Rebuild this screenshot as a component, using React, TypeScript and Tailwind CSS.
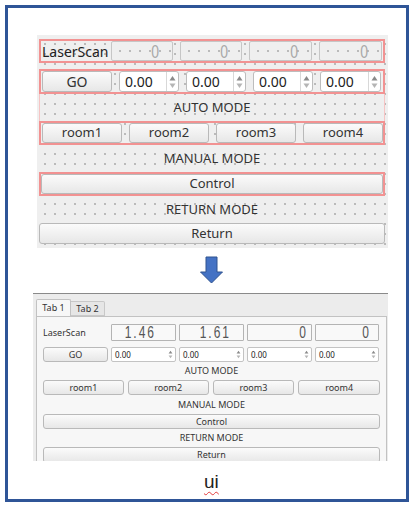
import React from "react";

const font = { fontFamily: '"Noto Sans", "Open Sans", sans-serif' };

const dots =
  "bg-[#efefef] bg-[radial-gradient(circle,#b9b9b9_0.7px,transparent_1px)] bg-size-[10px_10px] bg-position-[3px_4px]";

const Btn = ({ label, w, h, size }: { label: string; w: string; h: string; size: string }) => (
  <div
    className={`${w} ${h} ${size} flex items-center justify-center rounded-[3px] border border-[#b9b9b9] bg-linear-to-b from-[#fbfbfb] to-[#e7e7e7] text-[#333]`}
  >
    {label}
  </div>
);

const SpinArrows = ({ big }: { big?: boolean }) => (
  <svg width={big ? 7 : 5} height={big ? 14 : 9} viewBox="0 0 7 14" className="shrink-0">
    <polygon points="3.5,1 6.5,5.5 0.5,5.5" fill="#8a8a8a" />
    <polygon points="3.5,13 6.5,8.5 0.5,8.5" fill="#b5b5b5" />
  </svg>
);

const TopSpin = ({ w }: { w: string }) => (
  <div className={`${w} h-[21px] flex items-center rounded-[3px] border border-[#bdbdbd] bg-white pl-[5px] pr-[2px] text-[14px] text-[#222]`}>
    <span className="flex-1">0.00</span>
    <div className="h-full w-px bg-[#d8d8d8] mr-[2px]" />
    <SpinArrows big />
  </div>
);

const lcdFont = { fontFamily: '"Liberation Sans", sans-serif' };

const TopLcd = ({ w }: { w: string }) => (
  <div className={`${w} h-[20px] flex items-center justify-end pr-[13px] rounded-[2px] border border-[#c6c6c6] ${dots}`}>
    <span className="text-[14px] leading-none text-[#a8a8a8] scale-y-[1.3]" style={lcdFont}>
      0
    </span>
  </div>
);

const SmallSpin = ({ w }: { w: string }) => (
  <div className={`${w} h-[15px] flex items-center rounded-[2px] border border-[#c3c3c3] bg-white pl-[3px] pr-[2px] text-[8px] text-[#222]`}>
    <span className="flex-1">0.00</span>
    <SpinArrows />
  </div>
);

const Lcd = ({ value, w, pr }: { value: string; w: string; pr: string }) => (
  <div className={`${w} h-[17px] flex items-center justify-end ${pr} rounded-[1px] border border-[#b4b4b4] bg-[#f9f9f9]`}>
    <span className="text-[12px] leading-none tracking-[2px] text-[#555] scale-y-[1.3]" style={lcdFont}>
      {value}
    </span>
  </div>
);

export default function App() {
  return (
    <div className="w-[412px] h-[507px] bg-white overflow-hidden" style={font}>
      <div className="ml-[5px] mt-[5px] w-[404px] h-[497px] border-[3px] border-[#2f5597] flex flex-col">
        {/* designer view */}
        <div className={`ml-[29px] mt-[27px] w-[351px] h-[213px] ${dots} pt-[4px] pl-[2px] pr-[3px] flex flex-col text-[#333]`}>
          <div className="h-[24px] border-2 border-[#f29292] flex items-center">
            <div className="w-[70px] pl-[1px] text-[14px] text-[#222]">LaserScan</div>
            <div className="flex gap-[7px]">
              <TopLcd w="w-[62px]" />
              <TopLcd w="w-[62px]" />
              <TopLcd w="w-[63px]" />
              <TopLcd w="w-[63px]" />
            </div>
          </div>
          <div className="h-[6px]" />
          <div className="h-[25px] border-2 border-[#f29292] flex items-center pl-[1px] gap-[7px]">
            <Btn label="GO" w="w-[70px]" h="h-[21px]" size="text-[14px]" />
            <TopSpin w="w-[60px]" />
            <TopSpin w="w-[60px]" />
            <TopSpin w="w-[60px]" />
            <TopSpin w="w-[61px]" />
          </div>
          <div className="h-[27px] border-x border-[#f6c4c4] flex items-center justify-center text-[13px]">AUTO MODE</div>
          <div className="h-[24px] border-2 border-[#f29292] flex items-center pl-[1px] gap-[7px]">
            <Btn label="room1" w="w-[80px]" h="h-[20px]" size="text-[13px]" />
            <Btn label="room2" w="w-[80px]" h="h-[20px]" size="text-[13px]" />
            <Btn label="room3" w="w-[80px]" h="h-[20px]" size="text-[13px]" />
            <Btn label="room4" w="w-[80px]" h="h-[20px]" size="text-[13px]" />
          </div>
          <div className="h-[27px] flex items-center justify-center text-[13px]">MANUAL MODE</div>
          <div className="h-[24px] border-2 border-[#f29292] flex items-center">
            <Btn label="Control" w="w-full" h="h-[20px]" size="text-[13px]" />
          </div>
          <div className="h-[27px] flex items-center justify-center text-[13px]">RETURN MODE</div>
          <div className="flex">
            <Btn label="Return" w="w-full" h="h-[21px]" size="text-[13px]" />
          </div>
        </div>

        {/* arrow */}
        <svg width="24" height="28" viewBox="0 0 24 28" className="ml-[192px] mt-[8px]">
          <polygon points="6,1 17,1 17,16 22.5,16 11.5,27 0.5,16 6,16" fill="#4472c4" stroke="#2f528f" strokeWidth="1" />
        </svg>

        {/* running app */}
        <div className="ml-[25px] mt-[9px] w-[355px] h-[168px] border-t border-[#8a8a8a] bg-[#ececec] overflow-hidden flex flex-col text-[#333]">
          <div className="ml-[3px] mt-[5px] flex items-end text-[9px]">
            <div className="w-[35px] h-[17px] flex items-center justify-center border border-b-0 border-[#c2c2c2] bg-[#f7f7f7] rounded-t-[2px]">Tab 1</div>
            <div className="w-[34px] h-[15px] flex items-center justify-center border border-l-0 border-[#c8c8c8] bg-[#e6e6e6] rounded-tr-[2px]">Tab 2</div>
          </div>
          <div className="ml-[3px] w-[351px] flex-1 border border-b-0 border-[#c2c2c2] bg-[#f7f7f7] pt-[7px] pl-[6px] pr-[6px] flex flex-col text-[9px]">
            <div className="flex items-center">
              <div className="w-[68px]">LaserScan</div>
              <div className="flex gap-[3px]">
                <Lcd value="1.46" w="w-[65px]" pr="pr-[19px]" />
                <Lcd value="1.61" w="w-[65px]" pr="pr-[12px]" />
                <Lcd value="0" w="w-[65px]" pr="pr-[3px]" />
                <Lcd value="0" w="w-[64px]" pr="pr-[7px]" />
              </div>
            </div>
            <div className="mt-[6px] flex items-center gap-[3px]">
              <Btn label="GO" w="w-[65px]" h="h-[15px]" size="text-[9px]" />
              <SmallSpin w="w-[65px]" />
              <SmallSpin w="w-[65px]" />
              <SmallSpin w="w-[65px]" />
              <SmallSpin w="w-[64px]" />
            </div>
            <div className="h-[18px] flex items-center justify-center">AUTO MODE</div>
            <div className="flex gap-[4px]">
              <Btn label="room1" w="w-[81px]" h="h-[15px]" size="text-[9px]" />
              <Btn label="room2" w="w-[81px]" h="h-[15px]" size="text-[9px]" />
              <Btn label="room3" w="w-[82px]" h="h-[15px]" size="text-[9px]" />
              <Btn label="room4" w="w-[82px]" h="h-[15px]" size="text-[9px]" />
            </div>
            <div className="h-[19px] flex items-center justify-center">MANUAL MODE</div>
            <Btn label="Control" w="w-full" h="h-[15px]" size="text-[9px]" />
            <div className="h-[18px] flex items-center justify-center">RETURN MODE</div>
            <Btn label="Return" w="w-full" h="h-[16px]" size="text-[9px]" />
          </div>
        </div>

        <div
          className="ml-[196px] mt-[10px] text-[19px] leading-[22px] text-[#222] underline decoration-wavy decoration-[#e23b3b] decoration-1 underline-offset-[3px]"
          style={{ fontFamily: '"Liberation Sans", "Noto Sans", sans-serif' }}
        >
          ui
        </div>
      </div>
    </div>
  );
}
